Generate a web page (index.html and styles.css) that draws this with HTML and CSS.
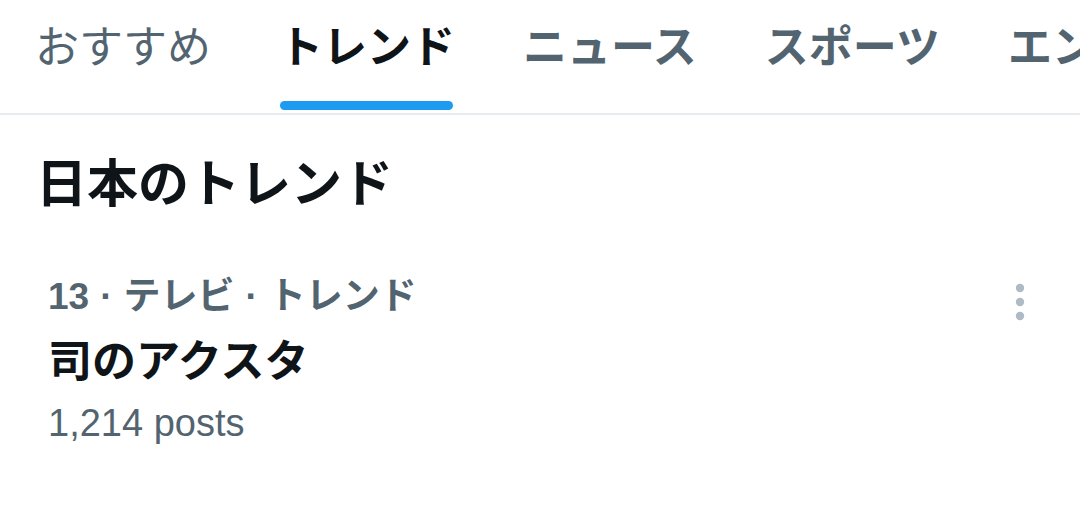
FILE: index.html
```html
<!DOCTYPE html>
<html lang="ja">
<head>
<meta charset="utf-8">
<link rel="stylesheet" href="styles.css">
</head>
<body>
<nav class="tabs">
  <div class="tab"><span class="label light">おすすめ</span></div>
  <div class="tab active"><span class="label">トレンド</span><span class="indicator"></span></div>
  <div class="tab"><span class="label">ニュース</span></div>
  <div class="tab"><span class="label">スポーツ</span></div>
  <div class="tab"><span class="label">エンタメ</span></div>
</nav>
<h1 class="heading">日本のトレンド</h1>
<div class="trend">
  <div class="trend-body">
    <div class="meta"><span class="rank">13</span><span class="sep">·</span>テレビ<span class="sep">·</span>トレンド</div>
    <div class="title">司のアクスタ</div>
    <div class="count">1,214 posts</div>
  </div>
  <div class="more">
    <svg width="10" height="38" viewBox="0 0 10 38"><circle cx="5" cy="5" r="4.2" fill="#aebbc4"/><circle cx="5" cy="19" r="4.2" fill="#aebbc4"/><circle cx="5" cy="33" r="4.2" fill="#aebbc4"/></svg>
  </div>
</div>
</body>
</html>
```
FILE: styles.css
```css
html, body {
  margin: 0;
  padding: 0;
  background: #ffffff;
  width: 1080px;
  height: 515px;
  overflow: hidden;
  font-family: "Liberation Sans", "Noto Sans CJK JP", sans-serif;
}
.tabs {
  display: flex;
  height: 113px;
  border-bottom: 2px solid #e7ecee;
  overflow: hidden;
  white-space: nowrap;
}
.tab {
  display: flex;
  flex-direction: column;
  align-items: stretch;
  padding: 0 34px;
  flex: none;
}
.tab:first-child {
  padding-left: 35px;
}
.label {
  display: block;
  padding-top: 19px;
  font-size: 44px;
  line-height: 50px;
  font-weight: 700;
  color: #536471;
  font-family: "Noto Sans CJK JP", sans-serif;
}
.label.light {
  font-weight: 400;
}
.tab.active .label {
  color: #0f1419;
}
.indicator {
  display: block;
  margin: 32px 2px 0 1px;
  height: 9px;
  border-radius: 5px;
  background: #1d9bf0;
}
.heading {
  margin: 35px 0 0 36px;
  font-size: 51px;
  line-height: 60px;
  font-weight: 700;
  color: #0f1419;
  font-family: "Noto Sans CJK JP", sans-serif;
}
.trend {
  display: flex;
  justify-content: space-between;
  align-items: flex-start;
  padding: 64px 55px 0 48px;
}
.meta {
  font-size: 37px;
  line-height: 46px;
  color: #536471;
  font-weight: 700;
}
.sep {
  margin: 0 11px;
}
.title {
  margin-top: 12px;
  font-size: 44px;
  line-height: 52px;
  font-weight: 700;
  color: #0f1419;
  font-family: "Noto Sans CJK JP", sans-serif;
}
.count {
  margin-top: 16px;
  font-size: 38px;
  line-height: 46px;
  color: #536471;
}
.more {
  padding-top: 9px;
}
.more svg {
  display: block;
}
```
